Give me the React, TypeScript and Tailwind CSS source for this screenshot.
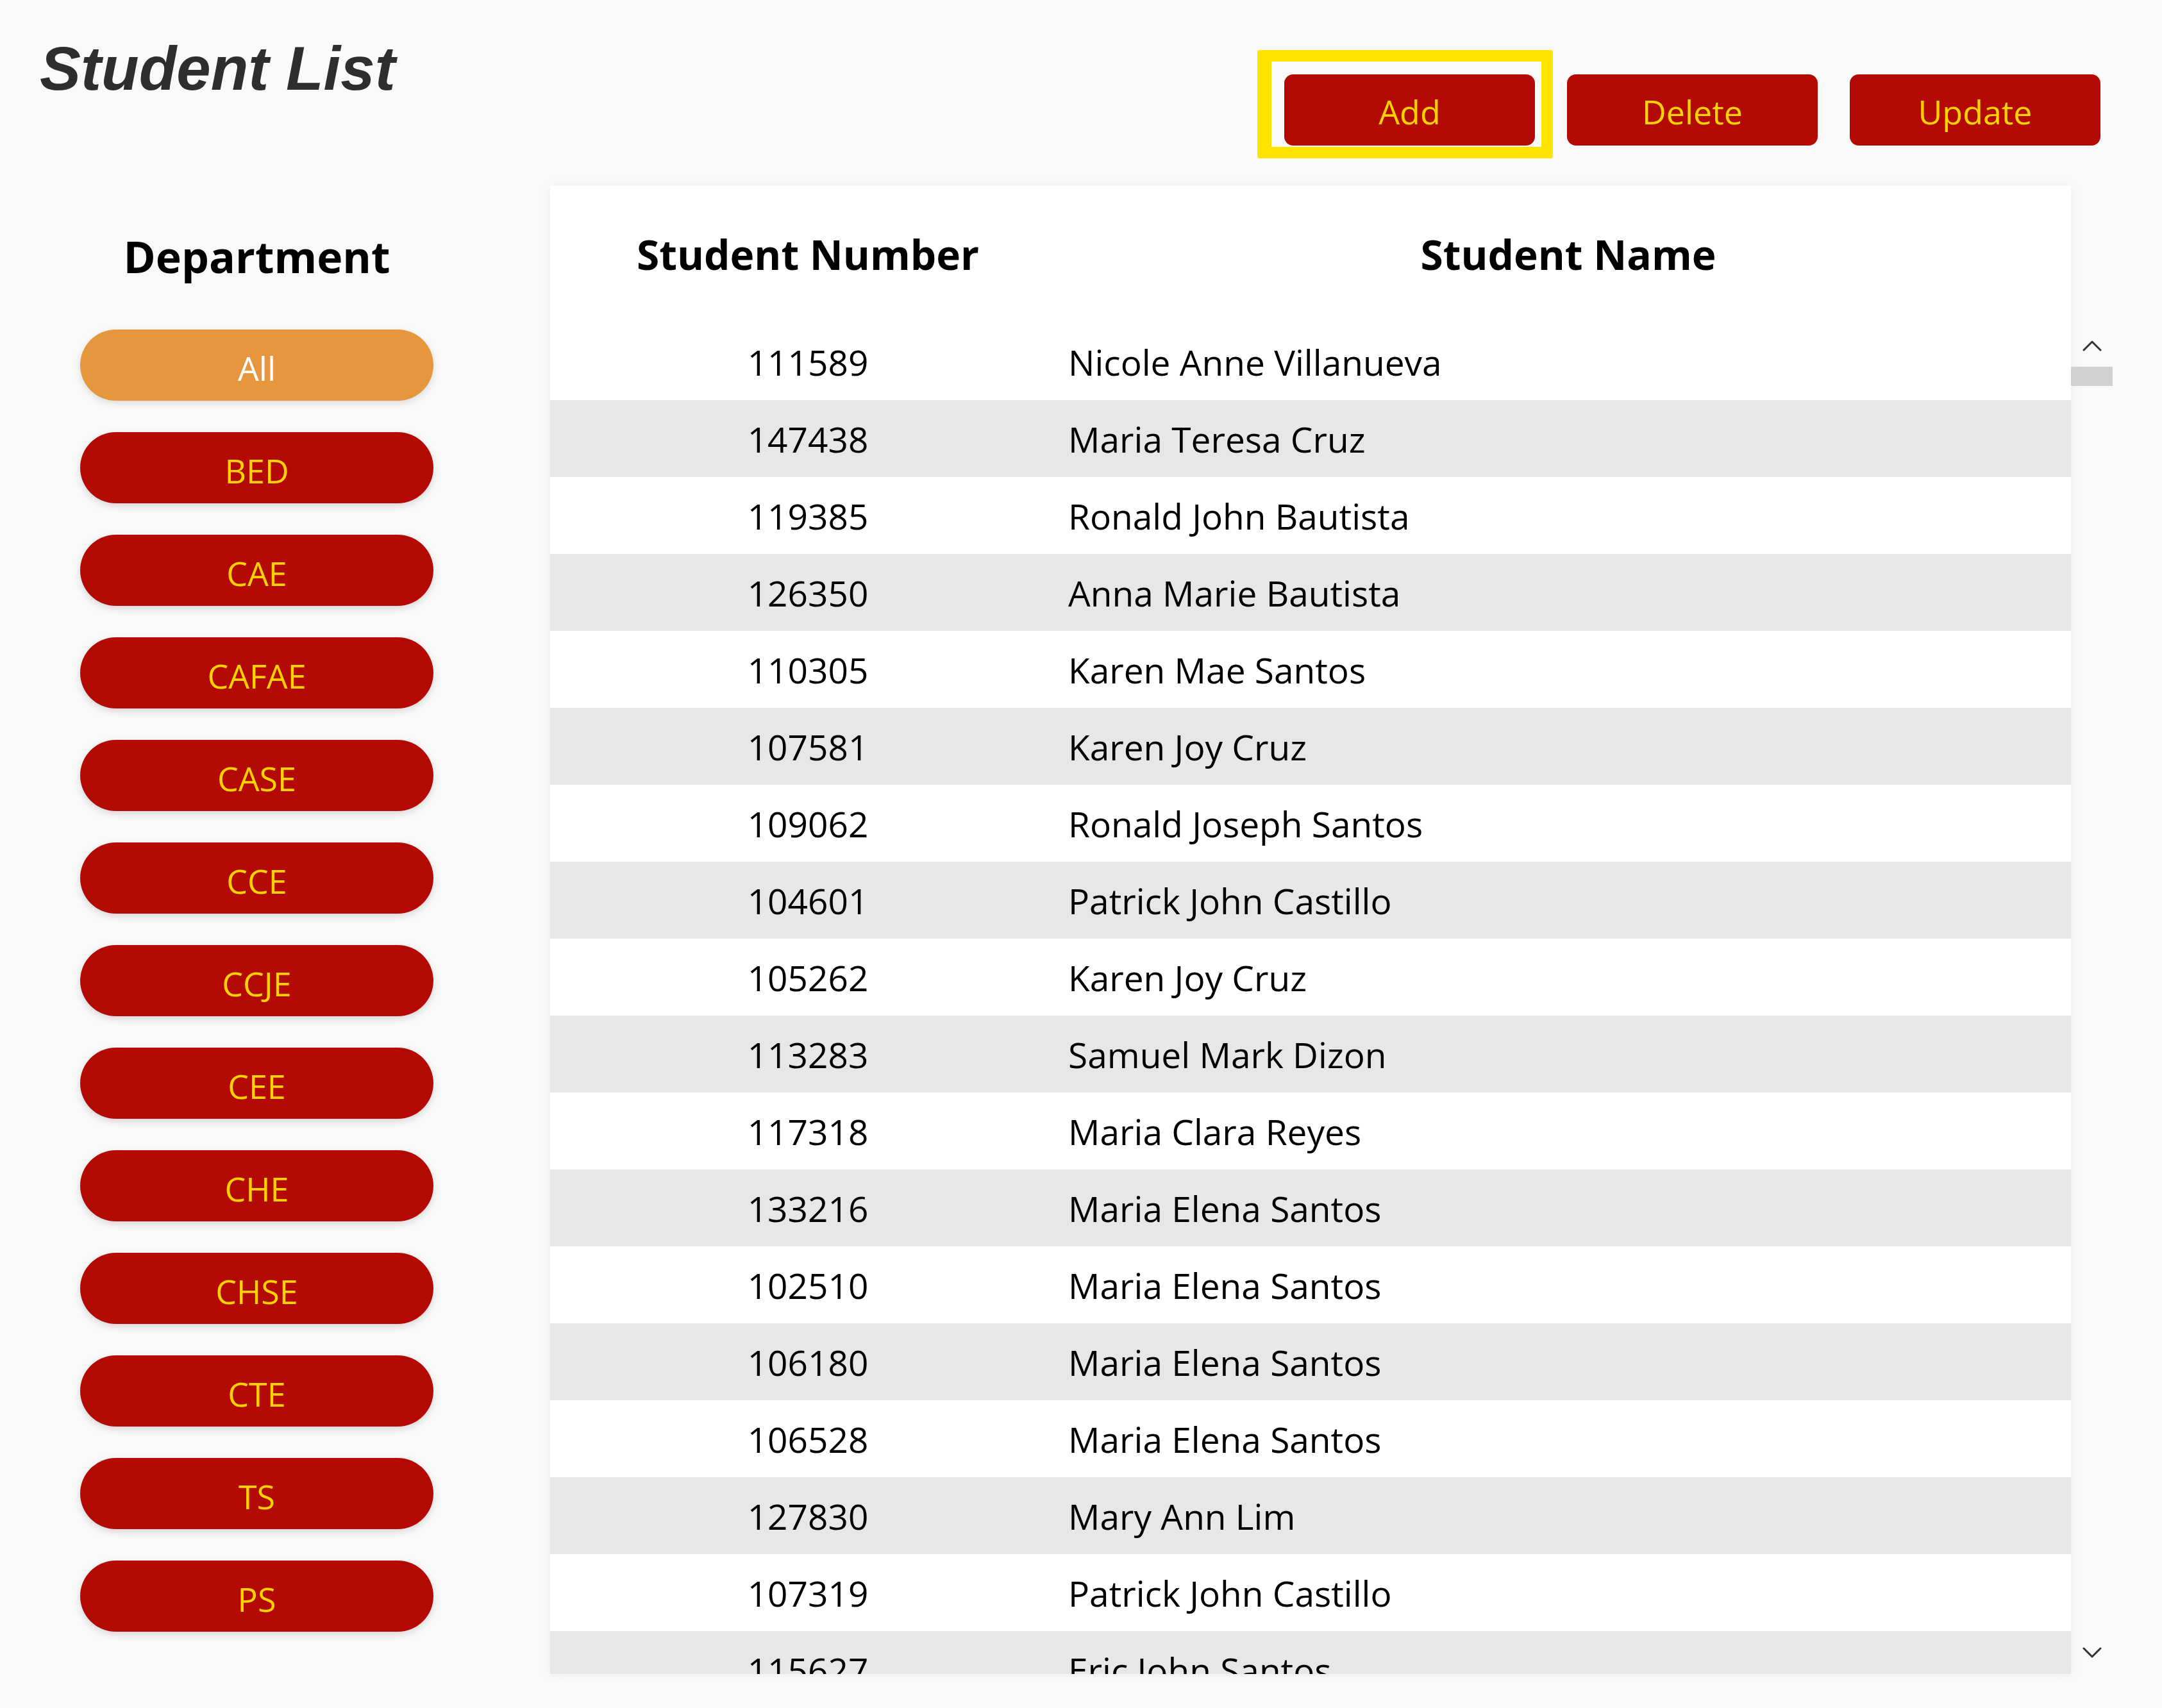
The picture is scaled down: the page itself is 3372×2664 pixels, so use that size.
import React from "react";

const departments = ["BED", "CAE", "CAFAE", "CASE", "CCE", "CCJE", "CEE", "CHE", "CHSE", "CTE", "TS", "PS"];

const students: [string, string][] = [
  ["111589", "Nicole Anne Villanueva"],
  ["147438", "Maria Teresa Cruz"],
  ["119385", "Ronald John Bautista"],
  ["126350", "Anna Marie Bautista"],
  ["110305", "Karen Mae Santos"],
  ["107581", "Karen Joy Cruz"],
  ["109062", "Ronald Joseph Santos"],
  ["104601", "Patrick John Castillo"],
  ["105262", "Karen Joy Cruz"],
  ["113283", "Samuel Mark Dizon"],
  ["117318", "Maria Clara Reyes"],
  ["133216", "Maria Elena Santos"],
  ["102510", "Maria Elena Santos"],
  ["106180", "Maria Elena Santos"],
  ["106528", "Maria Elena Santos"],
  ["127830", "Mary Ann Lim"],
  ["107319", "Patrick John Castillo"],
  ["115627", "Eric John Santos"],
];

function ActionButton({ label, selected }: { label: string; selected?: boolean }) {
  return (
    <div className="relative">
      {selected && (
        <div className="absolute -left-[42px] -right-[28px] -top-[38px] -bottom-[20px] border-[18px] border-l-[22px] border-[#ffe400] rounded-[3px]" />
      )}
      <button className="relative w-[391px] h-[111px] pt-[4px] rounded-[14px] bg-[#b30b04] text-[#ffd200] text-[52px] leading-none font-['Open_Sans',sans-serif] flex items-center justify-center">
        {label}
      </button>
    </div>
  );
}

function Pill({ label, active }: { label: string; active?: boolean }) {
  return (
    <div
      className={
        active
          ? "w-[551px] h-[111px] pt-[8px] rounded-full bg-[#e6963c] text-white text-[52px] leading-none flex items-center justify-center shadow-[0_4px_12px_rgba(0,0,0,0.12)]"
          : "w-[551px] h-[111px] pt-[8px] rounded-full bg-[#b30b04] text-[#ffd200] text-[52px] leading-none flex items-center justify-center shadow-[0_4px_12px_rgba(0,0,0,0.14)]"
      }
    >
      {label}
    </div>
  );
}

function Chevron({ up }: { up?: boolean }) {
  return (
    <svg width="30" height="18" viewBox="0 0 30 18" fill="none">
      <polyline
        points={up ? "2,16 15,3 28,16" : "2,2 15,15 28,2"}
        stroke="#333"
        strokeWidth="3"
        strokeLinecap="round"
        strokeLinejoin="round"
      />
    </svg>
  );
}

export default function App() {
  return (
    <div className="w-[3372px] h-[2664px] bg-[#f9f9f9] overflow-hidden font-['Open_Sans',sans-serif] text-black">
      {/* top bar */}
      <div className="h-[290px] flex justify-between items-start">
        <h1 className="pl-[62px] pt-[59px] text-[96px] leading-none font-bold italic text-[#2e2e2e] font-['Liberation_Sans',Arial,sans-serif]">
          Student List
        </h1>
        <div className="flex items-start gap-[50px] pt-[116px] pr-[96px]">
          <ActionButton label="Add" selected />
          <ActionButton label="Delete" />
          <ActionButton label="Update" />
        </div>
      </div>

      <div className="flex">
        {/* departments */}
        <div className="w-[858px] shrink-0">
          <div className="w-[801px] flex flex-col items-center">
            <div className="mt-[76px] text-[68px] leading-none font-bold">Department</div>
            <div className="mt-[80px] flex flex-col gap-[49px]">
              <Pill label="All" active />
              {departments.map((d) => (
                <Pill key={d} label={d} />
              ))}
            </div>
          </div>
        </div>

        {/* table */}
        <div className="w-[2372px] shrink-0 bg-white shadow-[0_0_18px_rgba(0,0,0,0.05)]">
          <div className="h-[214px] grid grid-cols-[804px_1fr] items-center text-[64px] leading-none font-bold">
            <div className="text-center">Student Number</div>
            <div className="text-center">Student Name</div>
          </div>
          <div className="h-[2107px] overflow-hidden">
            {students.map(([num, name], i) => (
              <div
                key={num}
                className={
                  i % 2 === 0
                    ? "h-[120px] grid grid-cols-[804px_1fr] items-center text-[55px] leading-none bg-white"
                    : "h-[120px] grid grid-cols-[804px_1fr] items-center text-[55px] leading-none bg-[#e7e7e7]"
                }
              >
                <div className="text-center">{num}</div>
                <div className="pl-[4px]">{name}</div>
              </div>
            ))}
          </div>
        </div>

        {/* scrollbar */}
        <div className="w-[69px] shrink-0 pt-[214px]">
          <div className="h-[2107px] flex flex-col">
            <div className="pt-[26px] pl-[18px]">
              <Chevron up />
            </div>
            <div className="mt-[24px] w-[65px] h-[30px] bg-[#d2d1cf]" />
            <div className="mt-auto pb-[24px] pl-[18px]">
              <Chevron />
            </div>
          </div>
        </div>
      </div>
    </div>
  );
}
